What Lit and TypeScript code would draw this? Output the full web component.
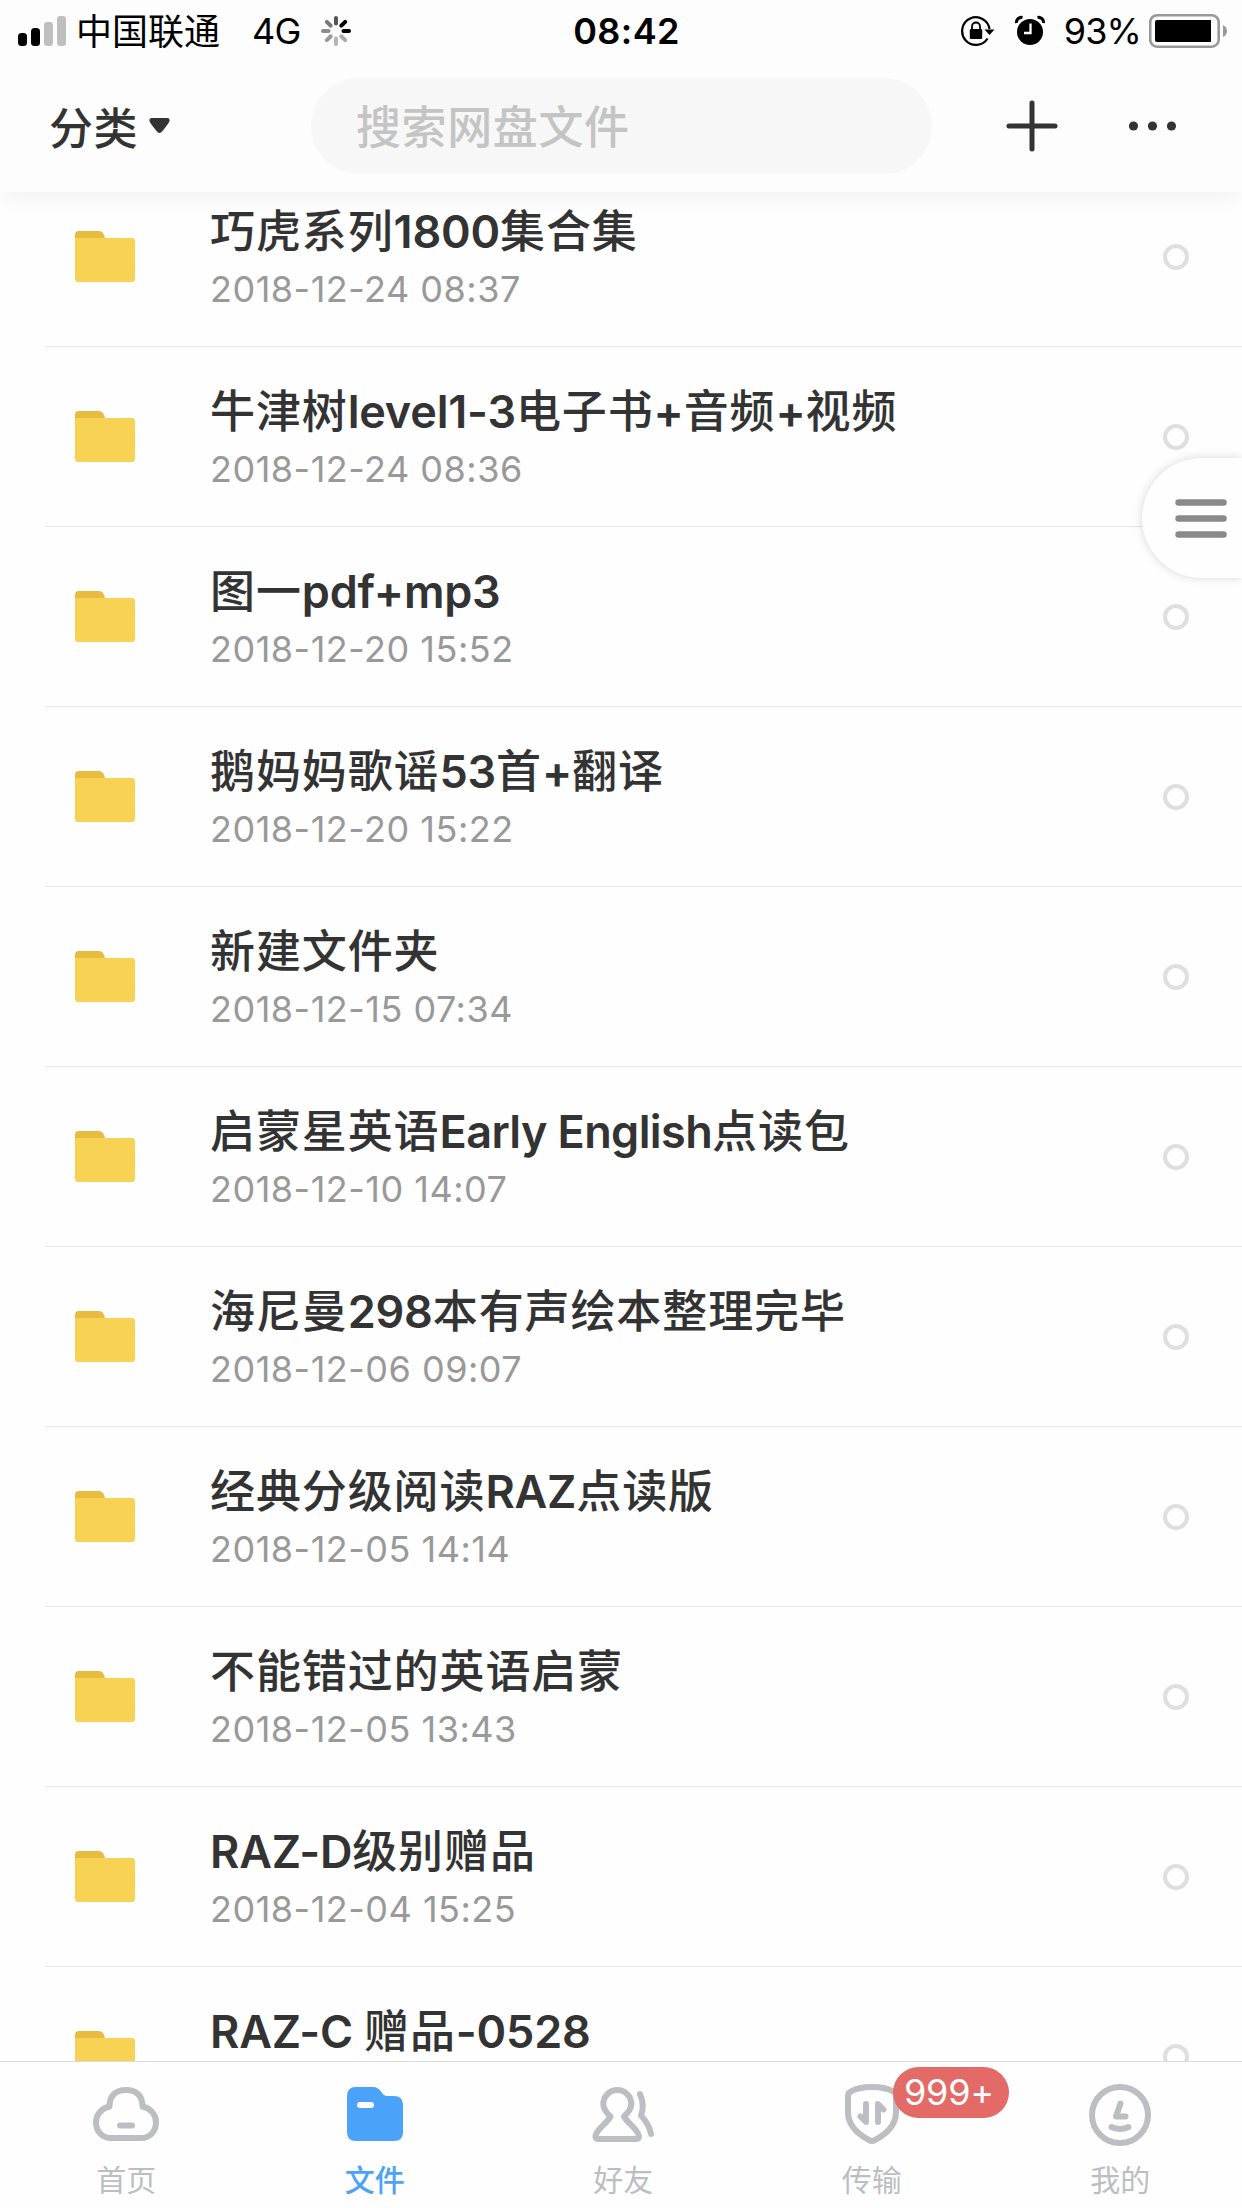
import { LitElement, html, svg, css } from "lit";
import { customElement, property } from "lit/decorators.js";

interface FileRow {
  name: string;
  time: string;
}

const FILES: FileRow[] = [
  { name: "巧虎系列1800集合集", time: "2018-12-24 08:37" },
  { name: "牛津树level1-3电子书+音频+视频", time: "2018-12-24 08:36" },
  { name: "图一pdf+mp3", time: "2018-12-20 15:52" },
  { name: "鹅妈妈歌谣53首+翻译", time: "2018-12-20 15:22" },
  { name: "新建文件夹", time: "2018-12-15 07:34" },
  { name: "启蒙星英语Early English点读包", time: "2018-12-10 14:07" },
  { name: "海尼曼298本有声绘本整理完毕", time: "2018-12-06 09:07" },
  { name: "经典分级阅读RAZ点读版", time: "2018-12-05 14:14" },
  { name: "不能错过的英语启蒙", time: "2018-12-05 13:43" },
  { name: "RAZ-D级别赠品", time: "2018-12-04 15:25" },
  { name: "RAZ-C 赠品-0528", time: "" },
];

@customElement("status-bar")
class StatusBar extends LitElement {
  static styles = css`
    :host {
      display: grid;
      grid-template-columns: 1fr auto 1fr;
      align-items: center;
      height: 60px;
      color: #000;
      font: 400 36px/60px Inter, "Noto Sans CJK SC", sans-serif;
      white-space: nowrap;
    }
    .side { display: flex; align-items: center; height: 60px; }
    .left { padding-left: 18px; }
    .right { justify-content: flex-end; padding-right: 15px; }
    svg { display: block; flex: none; }
    .carrier { margin-left: 10px; padding-bottom: 3px; font-family: "Noto Sans CJK SC", sans-serif; }
    .net { margin-left: 32px; padding-top: 1px; letter-spacing: -0.8px; }
    .spin { margin-left: 20px; }
    .time { font-weight: 600; letter-spacing: 0.4px; padding: 1px 0 0 11px; }
    .alarm { margin-left: 20px; }
    .pct { margin-left: 19px; padding-top: 1px; letter-spacing: -0.9px; }
    .batt { margin-left: 8px; }
  `;
  render() {
    const spokes = ["#555", "#000", "#000", "#aaa", "#b5b5b5", "#999", "#8c8c8c", "#777"];
    return html`
      <div class="side left">
        <svg width="48" height="60" viewBox="0 0 48 60">
          <rect x="0" y="32" width="9" height="13" rx="3.5" />
          <rect x="13" y="27" width="9" height="18" rx="3.5" />
          <rect x="26" y="21" width="9" height="24" rx="3" fill="#bfbfbf" />
          <rect x="39" y="15" width="9" height="30" rx="3" fill="#bfbfbf" />
        </svg>
        <span class="carrier">中国联通</span>
        <span class="net">4G</span>
        <svg class="spin" width="30" height="60" viewBox="-15 -30 30 60">
          ${spokes.map(
            (c, i) => svg`<line y1="-7.5" y2="-13" stroke=${c} stroke-width="4" stroke-linecap="round" transform="rotate(${i * 45})" />`
          )}
        </svg>
      </div>
      <span class="time">08:42</span>
      <div class="side right">
        <svg width="34" height="60" viewBox="962 0 34 60">
          <path d="M988.6 37.5 A13.8 13.8 0 1 1 990.6 28" fill="none" stroke="#000" stroke-width="2.2" />
          <path d="M985.5 28.5h10l-5 5.5z" />
          <rect x="970.8" y="28" width="12.4" height="10" rx="1" />
          <path d="M973 28.5v-3a4 4 0 0 1 8 0v3" fill="none" stroke="#000" stroke-width="1.8" />
        </svg>
        <svg class="alarm" width="30" height="60" viewBox="1015 0 30 60">
          <circle cx="1030" cy="31" r="13" />
          <path d="M1016.5 22a5 5 0 0 1 6-5.500M1043.500 22a5 5 0 0 0-6-5.500" fill="none" stroke="#000" stroke-width="3" />
          <path d="M1030.500 22.500v9.500h-6.500" fill="none" stroke="#fff" stroke-width="2.300" />
        </svg>
        <span class="pct">93%</span>
        <svg class="batt" width="78" height="60" viewBox="1149 0 78 60">
          <rect x="1150.200" y="14.200" width="68.500" height="31.500" rx="7" fill="none" stroke="#999" stroke-width="2.600" />
          <path d="M1157 19h54v22h-54q-2 0-2-2v-18q0-2 2-2z" />
          <path d="M1223 24q4 2 4 6t-4 6z" fill="#999" />
        </svg>
      </div>
    `;
  }
}

@customElement("top-nav")
class TopNav extends LitElement {
  static styles = css`
    :host {
      display: flex;
      align-items: center;
      height: 96px;
      padding: 18px 0;
      color: #333;
      font: 500 44px/94px "Noto Sans CJK SC", sans-serif;
    }
    svg { display: block; flex: none; }
    .sort { display: flex; align-items: center; height: 94px; width: 262px; padding-left: 49px; letter-spacing: 0.5px; }
    .caret { margin: 0 0 0 10px; }
    .search {
      width: 621px;
      height: 96px;
      border-radius: 48px;
      background: #f7f7f7;
      color: #c4c4c4;
      box-sizing: border-box;
      padding-left: 45px;
      font-size: 45px;
      letter-spacing: 0.6px;
    }
    .plus { margin-left: 74px; }
    .more { margin-left: 70px; }
  `;
  render() {
    return html`
      <div class="sort">
        <span>分类</span>
        <svg class="caret" width="23" height="18" viewBox="0 0 23 18">
          <path d="M4 1h15q3 0 2.500 3q-.5 2-7 10q-3 4-6 0q-6.500-8-7-10q-.5-3 2.500-3z" fill="#333" />
        </svg>
      </div>
      <div class="search">搜索网盘文件</div>
      <svg class="plus" width="52" height="52" viewBox="0 0 52 52" stroke="#333" stroke-width="5" stroke-linecap="round">
        <path d="M3 26h46M26 3v46" />
      </svg>
      <svg class="more" width="50" height="12" viewBox="0 0 50 12" fill="#333">
        <circle cx="5.500" cy="6" r="4.600" /><circle cx="24.500" cy="6" r="4.600" /><circle cx="43.500" cy="6" r="4.600" />
      </svg>
    `;
  }
}

@customElement("file-row")
class FileRowElement extends LitElement {
  @property() name = "";
  @property() time = "";
  static styles = css`
    :host {
      display: flex;
      box-sizing: border-box;
      height: 180px;
      margin-left: 45px;
      padding: 0 53px 0 30px;
      border-bottom: 1px solid #e6e6e6;
    }
    svg { display: block; flex: none; }
    .folder { margin-top: 64px; }
    .text { flex: 1; margin-left: 75px; padding-top: 32px; white-space: nowrap; }
    .name { height: 63px; color: #333; font: 500 45px/60px Inter, "Noto Sans CJK SC", sans-serif; }
    .cjk { font-family: "Noto Sans CJK SC", sans-serif; letter-spacing: 0.9px; }
    .lat { font-weight: 600; letter-spacing: -0.2px; }
    .word { letter-spacing: -0.6px; }
    .time { color: #999; font: 400 36px/55px Inter, sans-serif; letter-spacing: 0.5px; }
    .check { margin-top: 77px; }
  `;
  render() {
    const runs = this.name.match(/[\u4e00-\u9fff]+|[^\u4e00-\u9fff]+/g) ?? [];
    const kind = (r: string) => (/[\u4e00-\u9fff]/.test(r) ? "cjk" : /[a-z] [A-Z]/.test(r) ? "lat word" : "lat");
    return html`
      <svg class="folder" width="60" height="51" viewBox="0 0 60 51">
        <path d="M0 12V4q0-4 4-4h20q5 0 6 8v4z" fill="#e8bc40" />
        <path d="M0 7h57q3 0 3 3v38q0 3-3 3H3q-3 0-3-3z" fill="#f8d254" />
      </svg>
      <div class="text">
        <div class="name">${runs.map((r) => html`<span class=${kind(r)}>${r}</span>`)}</div>
        ${this.time ? html`<div class="time">${this.time}</div>` : null}
      </div>
      <svg class="check" width="26" height="26" viewBox="0 0 26 26">
        <circle cx="13" cy="13" r="11" fill="none" stroke="#dfdfdf" stroke-width="4" />
      </svg>
    `;
  }
}

@customElement("tab-bar")
class TabBar extends LitElement {
  static styles = css`
    :host {
      display: grid;
      grid-template-columns: repeat(5, 248.5px);
      box-sizing: border-box;
      height: 147px;
      padding-left: 2px;
      border-top: 1px solid #dcdcdc;
      background: #fefefe;
      color: #bbbfc3;
      font: 400 30px/44px "Noto Sans CJK SC", sans-serif;
    }
    .tab { display: flex; flex-direction: column; align-items: center; padding-top: 17px; position: relative; }
    .active { color: #4aa3f8; font-weight: 500; }
    svg { display: block; }
    .label { margin-top: 1px; }
    .badge {
      position: absolute;
      left: 145px;
      top: 5px;
      width: 116px;
      height: 51px;
      box-sizing: border-box;
      padding-right: 3px;
      border-radius: 26px;
      background: #e36a66;
      color: #fff;
      text-align: center;
      font: 400 36px/51px Inter, sans-serif;
      letter-spacing: -0.2px;
    }
  `;
  render() {
    const stroke = (shape: unknown) => html`<svg width="76" height="76" viewBox="0 0 76 76" fill="none" stroke="currentColor" stroke-width="6" stroke-linecap="round" stroke-linejoin="round">${shape}</svg>`;
    const tabs = [
      {
        label: "首页",
        icon: stroke(svg`<path d="M21.500 27.500C21.500 16 28 11 38 11S54.500 16 54.500 27.500C63 29.500 68 36 68 43.500C68 53 61 59 53 59H23C15 59 8 53 8 43.500C8 36 13 29.500 21.500 27.500z"/><path d="M32 46.500h12"/>`),
      },
      {
        label: "文件",
        active: true,
        icon: html`<svg width="76" height="76" viewBox="0 0 76 76"><path d="M19 8H36q5 0 8 4.500q3 4.500 6 4.500h7q9 0 9 9v27q0 9-9 9H19q-9 0-9-9V17q0-9 9-9z" fill="currentColor"/><path d="M23 26h11" stroke="#fff" stroke-width="6" stroke-linecap="round"/></svg>`,
      },
      {
        label: "好友",
        icon: stroke(svg`<path d="M25.500 37.500C20.500 33 18.300 29 18.300 25a14 14 0 0 1 28 0C46.300 29 44 33 39 37.500C43 45 52 49 54 57q.3 3-2.500 3H13q-2.800 0-2.500-3C12.500 49 21.500 45 25.500 37.500z"/><path d="M55 15Q60 26 56 36.500Q64 45 66 55"/>`),
      },
      {
        label: "传输",
        badge: "999+",
        icon: stroke(svg`<path d="M38 8Q52 8 60 13Q62 14.500 62 17V33Q62 50 41 61Q38 63 35 61Q14 50 14 33V17Q14 14.500 16 13Q24 8 38 8z"/><path d="M32 25v18l-5.500-5.500M44 43V25l5.500 5.500"/>`),
      },
      {
        label: "我的",
        icon: stroke(svg`<circle cx="38" cy="36" r="28"/><path d="M38.500 24.500L34 37.500h9.500M29.500 48q8.500 4 17 0"/>`),
      },
    ];
    return tabs.map(
      (t) => html`<div class="tab ${t.active ? "active" : ""}">
        ${t.icon}<span class="label">${t.label}</span>
        ${t.badge ? html`<span class="badge">${t.badge}</span>` : null}
      </div>`
    );
  }
}

@customElement("app-root")
class AppRoot extends LitElement {
  static styles = css`
    :host {
      display: flex;
      flex-direction: column;
      position: relative;
      width: 1242px;
      height: 2208px;
      overflow: hidden;
      background: #fefefe;
    }
    .head {
      flex: none;
      height: 192px;
      background: #fdfdfd;
      position: relative;
      z-index: 1;
      box-shadow: 0 4px 24px rgba(0, 0, 0, 0.06);
    }
    .list { flex: 1; min-height: 0; overflow: hidden; }
    .rows { margin-top: -25px; }
    .drawer {
      position: absolute;
      top: 458px;
      right: 0;
      width: 100px;
      height: 120px;
      box-sizing: border-box;
      padding: 41px 0 0 33px;
      border-radius: 60px 0 0 60px;
      background: #fefefe;
      box-shadow: 0 0 10px rgba(0, 0, 0, 0.16);
    }
    .drawer svg { display: block; }
  `;
  render() {
    return html`
      <div class="head"><status-bar></status-bar><top-nav></top-nav></div>
      <div class="list">
        <div class="rows">${FILES.map((f) => html`<file-row .name=${f.name} .time=${f.time}></file-row>`)}</div>
      </div>
      <tab-bar></tab-bar>
      <div class="drawer">
        <svg width="52" height="40" viewBox="0 0 52 40" stroke="#8a8a8a" stroke-width="6.500" stroke-linecap="round">
          <path d="M3.500 3.500h45M3.500 19.500h45M3.500 35.500h45" />
        </svg>
      </div>
    `;
  }
}
